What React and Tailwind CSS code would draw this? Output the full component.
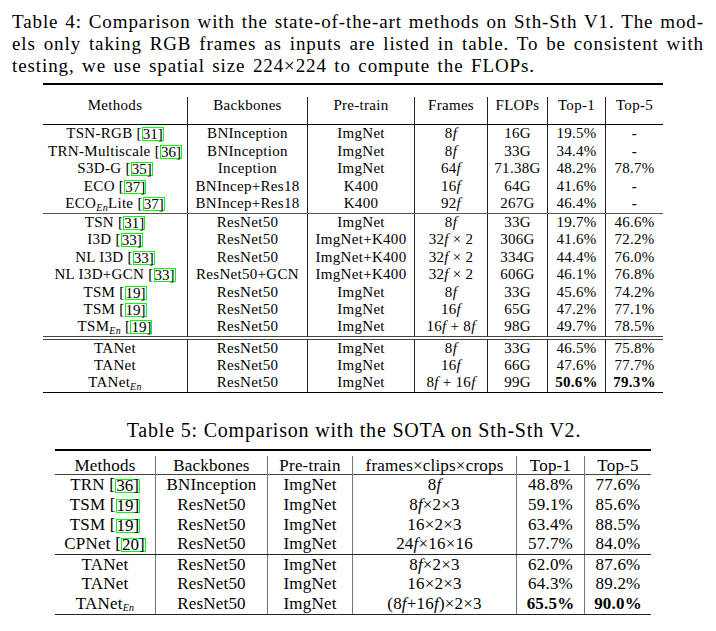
import React from 'react';

const Cite = ({ n }) => (
  <>
    {' '}[
    <span className="inline-block border border-[#00ff00] leading-[12px] h-[14px] align-[-1px] tracking-normal">{n}]</span>
  </>
);

const En = () => <sub className="text-[10px] italic">En</sub>;
const F = ({ n }) => (
  <>
    {n}
    <i>f</i>
  </>
);
const Dash = () => <b>-</b>;

const t4cols = 'grid-cols-[144px_120px_107px_73px_60px_58px_58px]';
const t5cols = 'grid-cols-[100px_112px_85px_164px_68px_67px]';

const t4g1 = [
  [<>TSN-RGB<Cite n="31" /></>, 'BNInception', 'ImgNet', <F n="8" />, '16G', '19.5%', <Dash />],
  [<>TRN-Multiscale<Cite n="36" /></>, 'BNInception', 'ImgNet', <F n="8" />, '33G', '34.4%', <Dash />],
  [<>S3D-G<Cite n="35" /></>, 'Inception', 'ImgNet', <F n="64" />, '71.38G', '48.2%', '78.7%'],
  [<>ECO<Cite n="37" /></>, 'BNIncep+Res18', 'K400', <F n="16" />, '64G', '41.6%', <Dash />],
  [<>ECO<En />Lite<Cite n="37" /></>, 'BNIncep+Res18', 'K400', <F n="92" />, '267G', '46.4%', <Dash />],
];

const t4g2 = [
  [<>TSN<Cite n="31" /></>, 'ResNet50', 'ImgNet', <F n="8" />, '33G', '19.7%', '46.6%'],
  [<>I3D<Cite n="33" /></>, 'ResNet50', 'ImgNet+K400', <><F n="32" /> × 2</>, '306G', '41.6%', '72.2%'],
  [<>NL I3D<Cite n="33" /></>, 'ResNet50', 'ImgNet+K400', <><F n="32" /> × 2</>, '334G', '44.4%', '76.0%'],
  [<>NL I3D+GCN<Cite n="33" /></>, 'ResNet50+GCN', 'ImgNet+K400', <><F n="32" /> × 2</>, '606G', '46.1%', '76.8%'],
  [<>TSM<Cite n="19" /></>, 'ResNet50', 'ImgNet', <F n="8" />, '33G', '45.6%', '74.2%'],
  [<>TSM<Cite n="19" /></>, 'ResNet50', 'ImgNet', <F n="16" />, '65G', '47.2%', '77.1%'],
  [<>TSM<En /><Cite n="19" /></>, 'ResNet50', 'ImgNet', <><F n="16" /> + <F n="8" /></>, '98G', '49.7%', '78.5%'],
];

const t4g3 = [
  ['TANet', 'ResNet50', 'ImgNet', <F n="8" />, '33G', '46.5%', '75.8%'],
  ['TANet', 'ResNet50', 'ImgNet', <F n="16" />, '66G', '47.6%', '77.7%'],
  [<>TANet<En /></>, 'ResNet50', 'ImgNet', <><F n="8" /> + <F n="16" /></>, '99G', <b>50.6%</b>, <b>79.3%</b>],
];

const t5g1 = [
  [<>TRN<Cite n="36" /></>, 'BNInception', 'ImgNet', <F n="8" />, '48.8%', '77.6%'],
  [<>TSM<Cite n="19" /></>, 'ResNet50', 'ImgNet', <><F n="8" />×2×3</>, '59.1%', '85.6%'],
  [<>TSM<Cite n="19" /></>, 'ResNet50', 'ImgNet', '16×2×3', '63.4%', '88.5%'],
  [<>CPNet<Cite n="20" /></>, 'ResNet50', 'ImgNet', <><F n="24" />×16×16</>, '57.7%', '84.0%'],
];

const t5g2 = [
  ['TANet', 'ResNet50', 'ImgNet', <><F n="8" />×2×3</>, '62.0%', '87.6%'],
  ['TANet', 'ResNet50', 'ImgNet', '16×2×3', '64.3%', '89.2%'],
  [<>TANet<En /></>, 'ResNet50', 'ImgNet', <>(<F n="8" />+<F n="16" />)×2×3</>, <b>65.5%</b>, <b>90.0%</b>],
];

const Row = ({ cells, cols, h, line }) => (
  <div className={`grid ${cols} ${h}`}>
    {cells.map((c, i) => (
      <div key={i} className={`text-center whitespace-nowrap ${i > 0 ? `border-l ${line}` : ''}`}>
        {c}
      </div>
    ))}
  </div>
);

export default function App() {
  return (
    <div className="w-[716px] h-[631px] bg-white text-black font-['Liberation_Serif',serif] overflow-hidden">
      {/* caption table 4 */}
      <div className="px-[12px] pt-[11px] text-[19px] leading-[22px] tracking-[0.9px]">
        <div className="whitespace-nowrap text-justify [text-align-last:justify]">
          Table 4: Comparison with the state-of-the-art methods on Sth-Sth V1. The mod-
        </div>
        <div className="whitespace-nowrap text-justify [text-align-last:justify]">
          els only taking RGB frames as inputs are listed in table. To be consistent with
        </div>
        <div className="whitespace-nowrap [word-spacing:1.8px]">
          testing, we use spatial size 224×224 to compute the FLOPs.
        </div>
      </div>

      {/* table 4 */}
      <div className="ml-[43px] w-[620px] mt-[6px] text-[15px] leading-[17.5px] tracking-[0.3px]">
        <div className="h-[2px] bg-black" />
        <div className="pt-[7px] border-b border-black">
          <Row
            cols={t4cols}
            h="h-[32px] pt-[5px]"
            line="border-[#222]"
            cells={['Methods', 'Backbones', 'Pre-train', 'Frames', 'FLOPs', 'Top-1', 'Top-5']}
          />
        </div>
        {t4g1.map((r, i) => (
          <Row key={i} cols={t4cols} h="h-[17.6px]" line="border-[#222]" cells={r} />
        ))}
        <div className="h-px bg-[#555]" />
        {t4g2.map((r, i) => (
          <Row key={i} cols={t4cols} h="h-[17.4px]" line="border-[#222]" cells={r} />
        ))}
        <div className="h-px bg-[#444]" />
        <div className="h-[2px]" />
        <div className="h-px bg-[#444]" />
        {t4g3.map((r, i) => (
          <Row key={i} cols={t4cols} h="h-[17.4px]" line="border-[#222]" cells={r} />
        ))}
        <div className="h-[1.5px] bg-black" />
      </div>

      {/* caption table 5 */}
      <div className="mt-[25px] text-[20px] leading-[24px] tracking-[0.8px] text-center w-[708px]">
        Table 5: Comparison with the SOTA on Sth-Sth V2.
      </div>

      {/* table 5 */}
      <div className="ml-[55px] w-[596px] mt-[7px] text-[17px] leading-[19.5px] tracking-[0.2px]">
        <div className="h-[2px] bg-black" />
        <div className="pt-[6px] border-b border-[#444]">
          <Row
            cols={t5cols}
            h="h-[18px] -mt-[1px]"
            line="border-[#777]"
            cells={['Methods', 'Backbones', 'Pre-train', 'frames×clips×crops', 'Top-1', 'Top-5']}
          />
        </div>
        {t5g1.map((r, i) => (
          <Row key={i} cols={t5cols} h="h-[19.6px]" line="border-[#777]" cells={r} />
        ))}
        <div className="h-px bg-[#222]" />
        {t5g2.map((r, i) => (
          <Row key={i} cols={t5cols} h="h-[19.6px]" line="border-[#777]" cells={r} />
        ))}
        <div className="h-[1.5px] bg-[#222]" />
      </div>
    </div>
  );
}
